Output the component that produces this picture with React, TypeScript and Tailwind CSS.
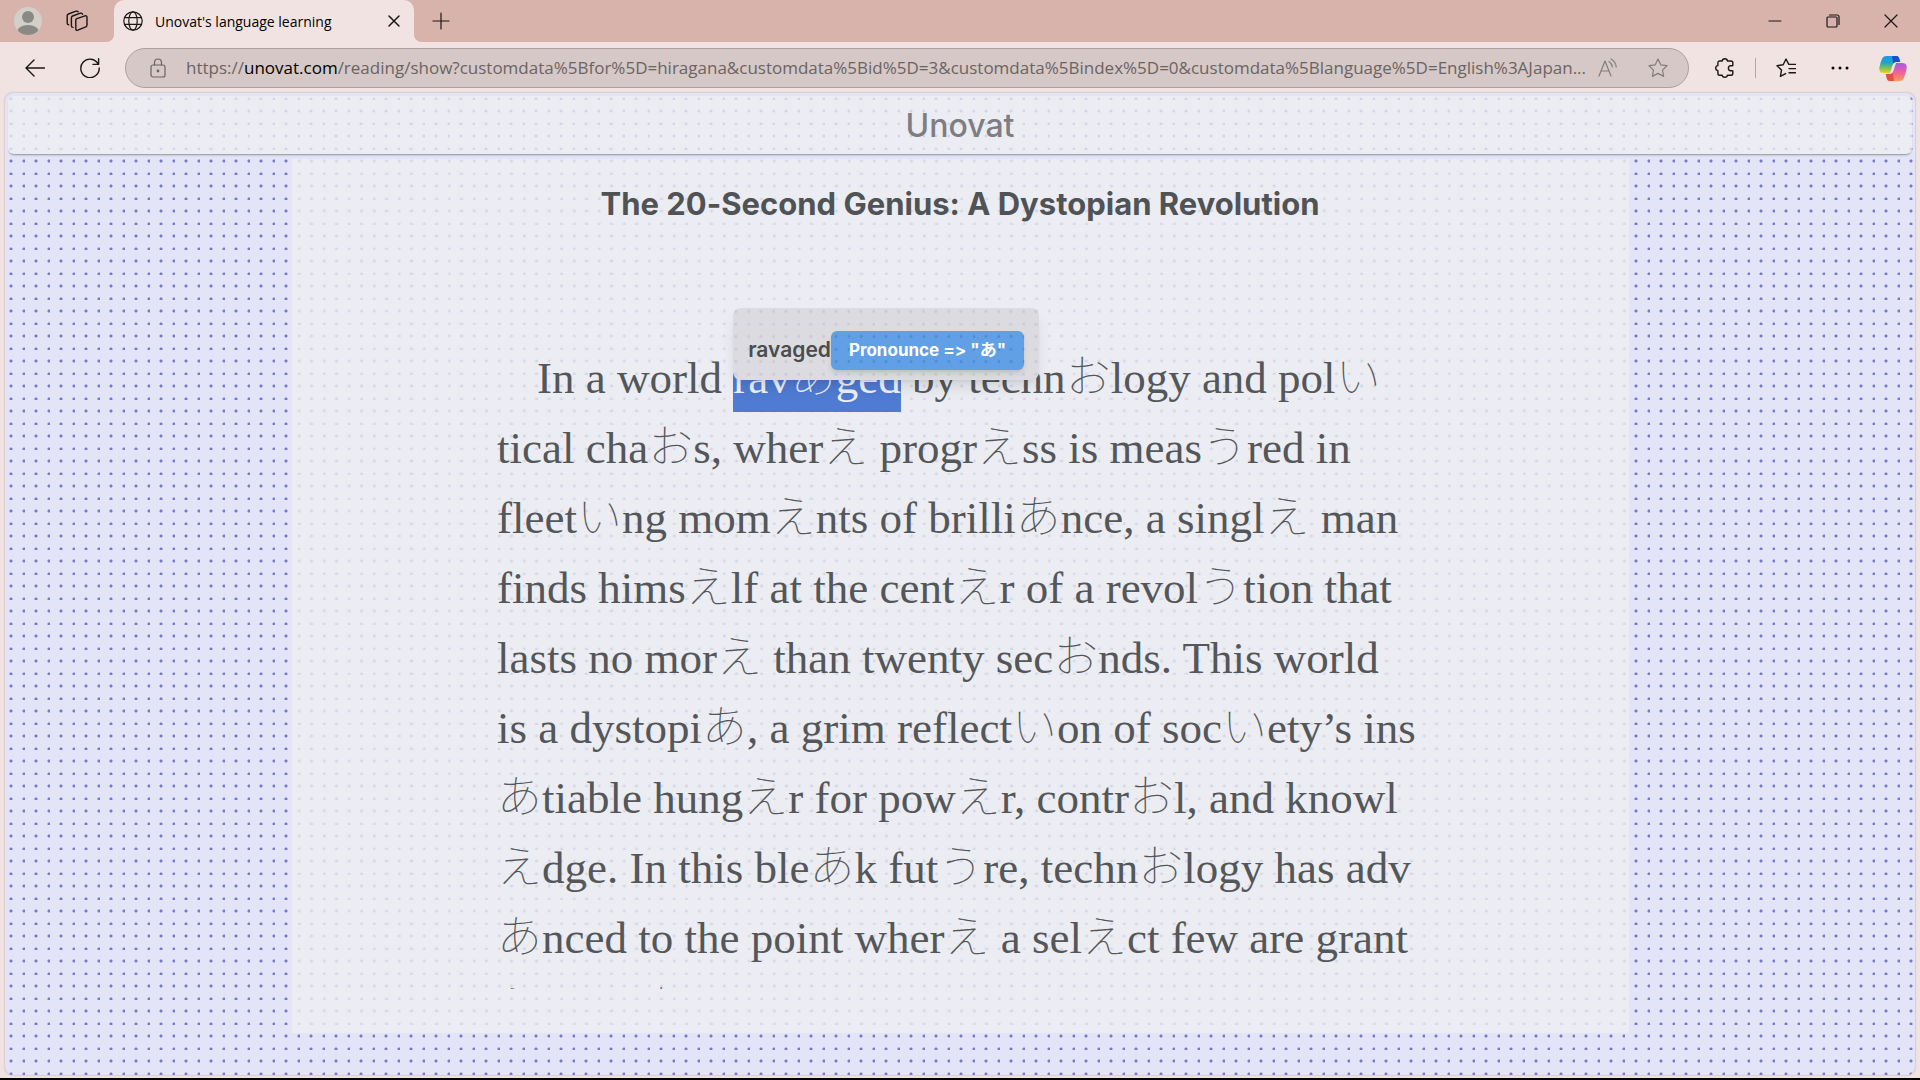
import React from 'react';

const DOTS =
  'bg-fixed bg-[length:25px_25px] bg-[image:radial-gradient(circle_at_11px_11px,var(--dot)_1px,transparent_2px),radial-gradient(circle_at_24px_11px,var(--dot)_1px,transparent_2px),radial-gradient(circle_at_11px_24px,var(--dot)_1px,transparent_2px),radial-gradient(circle_at_24px_24px,var(--dot)_1px,transparent_2px)]';

const UI_FONT = "font-['Open_Sans','Noto_Sans',sans-serif]";
const BRAND_FONT = "font-['Inter','Noto_Sans_CJK_JP',sans-serif] [font-feature-settings:'calt'_0]";

const lines = [
  'tical chaおs, wherえ progrえss is measうred in',
  'fleetいng momえnts of brilliあnce, a singlえ man',
  'finds himsえlf at the centえr of a revolうtion that',
  'lasts no morえ than twenty secおnds. This world',
  'is a dystopiあ, a grim reflectいon of socいety’s ins',
  'あtiable hungえr for powえr, contrおl, and knowl',
  'えdge. In this bleあk futうre, technおlogy has adv',
  'あnced to the point wherえ a selえct few are grant',
  'えd the あbilいty to',
];

// Hiragana vowels are set in a lighter face than the english text.
const Mixed: React.FC<{ text: string }> = ({ text }) => (
  <>
    {text.split(/([あいうえお])/).map((part, i) =>
      i % 2 ? (
        <span key={i} className="font-['Noto_Sans_CJK_JP',sans-serif] font-thin">{part}</span>
      ) : (
        part
      )
    )}
  </>
);

const Svg: React.FC<{ className?: string; box?: number; children: React.ReactNode }> = ({ className = 'size-5', box = 20, children }) => (
  <svg className={className} viewBox={`0 0 ${box} ${box}`} fill="none" stroke="currentColor" strokeWidth="1.2" strokeLinecap="round" strokeLinejoin="round" aria-hidden="true">
    {children}
  </svg>
);

const STAR = 'M10 1 L12.8 6.8 L19 7.7 L14.5 12.1 L15.6 18.4 L10 15.4 L4.4 18.4 L5.5 12.1 L1 7.7 L7.2 6.8 Z';

const TabStrip = () => (
  <div className="flex h-[42px] items-stretch bg-[#d7b3ab] pl-[14px] text-[#1c1716]">
    <button aria-label="Profile" className="self-center">
      <svg className="size-7" viewBox="0 0 28 28" aria-hidden="true">
        <clipPath id="avatar"><circle cx="14" cy="14" r="14" /></clipPath>
        <g clipPath="url(#avatar)">
          <rect width="28" height="28" fill="#d3cfc8" />
          <circle cx="14" cy="10" r="6" fill="#8b8984" />
          <ellipse cx="14" cy="25" rx="11" ry="7" fill="#8b8984" />
        </g>
      </svg>
    </button>
    <button aria-label="Workspaces" className="ml-6 self-center">
      <Svg className="size-[22px]" box={22}>
        <path d="M10.8 8.6 L19 5.8 Q21 5.4 21 7.2 V15 Q21 16.2 19.8 16.8 L11.8 20.2 Q9.8 20.8 9.8 18.8 V10.2 Q9.8 9 10.8 8.6 Z" strokeWidth="1.4" />
        <path d="M7 17.4 Q5.4 17.4 5.4 15.8 V7.8 Q5.4 6.5 6.6 6 L14.4 3.2 Q16.2 2.8 16.6 4.2" strokeWidth="1.4" />
        <path d="M2.6 14.8 Q1.2 14.6 1.2 13 V5.8 Q1.2 4.5 2.4 4 L10 1.2 Q11.6 0.8 12.2 1.8" strokeWidth="1.4" />
      </Svg>
    </button>
    <div className="relative ml-[26px] flex w-[300px] items-center rounded-t-[10px] bg-[#f1e3e1] pl-[9px] pr-[13px]">
      <div className="absolute -left-2 bottom-0 size-2 bg-[radial-gradient(circle_at_0_0,#d7b3ab_8px,#f1e3e1_8px)]" />
      <div className="absolute -right-2 bottom-0 size-2 bg-[radial-gradient(circle_at_100%_0,#d7b3ab_8px,#f1e3e1_8px)]" />
      <Svg className="size-5">
        <circle cx="10" cy="10" r="9.2" />
        <ellipse cx="10" cy="10" rx="4.2" ry="9.2" />
        <path d="M1.5 6.7 H18.5 M1.5 13.3 H18.5" />
      </Svg>
      <span className="ml-3 flex-1 text-[14px] text-black">Unovat's language learning</span>
      <button aria-label="Close tab">
        <Svg className="size-[14px]" box={14}><path d="M2 2 L12 12 M12 2 L2 12" strokeWidth="1.5" /></Svg>
      </button>
    </div>
    <button aria-label="New tab" className="ml-[18px]">
      <Svg className="size-[18px]" box={18}><path d="M9 1 V17 M1 9 H17" /></Svg>
    </button>
    <div className="ml-auto flex">
      <button aria-label="Minimize" className="flex w-[58px] items-center justify-center">
        <Svg className="size-[14px]" box={14}><path d="M1 7 H13" /></Svg>
      </button>
      <button aria-label="Restore" className="flex w-[58px] items-center justify-center">
        <Svg className="size-[14px]" box={14}>
          <rect x="1" y="3" width="10" height="10" rx="1" />
          <path d="M3.5 1 H11 Q13 1 13 3 V10.5" />
        </Svg>
      </button>
      <button aria-label="Close" className="flex w-[58px] items-center justify-center">
        <Svg className="size-[14px]" box={14}><path d="M1 1 L13 13 M13 1 L1 13" /></Svg>
      </button>
    </div>
  </div>
);

const Copilot = () => (
  <svg className="size-7" viewBox="0 0 28 28" aria-hidden="true">
    <defs>
      <linearGradient id="cpLeft" x1="0" y1="0" x2="0" y2="1">
        <stop offset="0" stopColor="#1a9be6" />
        <stop offset="0.4" stopColor="#1fa5c9" />
        <stop offset="0.7" stopColor="#7cc254" />
        <stop offset="1" stopColor="#f2cc2a" />
      </linearGradient>
      <linearGradient id="cpRight" x1="0" y1="0" x2="0" y2="1">
        <stop offset="0" stopColor="#a25bea" />
        <stop offset="0.5" stopColor="#ee5f9c" />
        <stop offset="1" stopColor="#fb9a58" />
      </linearGradient>
    </defs>
    <path d="M13 2 H17.5 Q19.4 2 20 4 L21.3 8 H17 Q14.6 8 13.8 10.5 L11 19 H5 Q-0.5 19 0.4 13.5 Q1.2 9 3 5 Q4.2 2 7.5 2 Z" fill="url(#cpLeft)" />
    <path d="M13 2 H17.5 Q19.4 2 20 4 L21.3 8 H17 Q15 8 14.2 9.6 Z" fill="#1d4fc4" />
    <path d="M15 27 H10.5 Q8.6 27 8 25 L6.7 20 H11 Q13.4 20 14.2 17.5 L17 9 H23 Q28.5 9 27.6 14.5 Q26.8 19 25 23.5 Q23.8 27 20.5 27 Z" fill="url(#cpRight)" />
    <path d="M15 27 H10.5 Q8.6 27 8 25 L6.7 20 H11 Q13 20 13.8 18.4 Z" fill="#e2503f" />
  </svg>
);

const Toolbar = () => (
  <div className="flex h-[51px] items-center pl-[25px] pr-[13px] text-[#1c1716]">
    <button aria-label="Back">
      <Svg><path d="M19.5 10 H1 M9 2 L1 10 L9 18" strokeWidth="1.4" /></Svg>
    </button>
    <button aria-label="Refresh" className="ml-[35px]">
      <Svg><path d="M18.2 6.2 A9.2 9.2 0 1 0 19.2 10 M18.6 0.8 V6.4 H13" strokeWidth="1.4" /></Svg>
    </button>
    <div className="ml-[25px] flex h-10 flex-1 items-center rounded-full border border-[#ada0a0] bg-[#d5c8c6] pl-[22px] pr-5 text-[#6b6463]">
      <Svg>
        <rect x="3" y="7" width="14" height="12" rx="2" />
        <path d="M6.5 7 V4.6 Q6.5 1 10 1 Q13.5 1 13.5 4.6 V7" />
        <circle cx="10" cy="13" r="0.8" fill="currentColor" />
      </Svg>
      <label htmlFor="address" className="ml-[18px] text-[17px]">
        https://<span className="text-black">unovat.com</span>
      </label>
      <input
        id="address"
        aria-label="Address"
        readOnly
        className="min-w-0 flex-1 bg-transparent text-[17px] outline-none"
        value="/reading/show?customdata%5Bfor%5D=hiragana&customdata%5Bid%5D=3&customdata%5Bindex%5D=0&customdata%5Blanguage%5D=English%3AJapan..."
      />
      <button aria-label="Read aloud" className="text-[#857d7c]">
        <Svg>
          <path d="M1 18 L7 3 L13 18 M3.2 13 H10.8" />
          <path d="M11 3.5 Q14 5.5 14.3 9 M13 1 Q18 4 18.2 9" />
        </Svg>
      </button>
      <button aria-label="Add to favorites" className="ml-[30px] text-[#857d7c]"><Svg><path d={STAR} /></Svg></button>
    </div>
    <button aria-label="Extensions" className="ml-[26px]">
      <Svg><path d="M4.5 3 H7.2 Q7.4 0.8 9.8 0.8 Q12.2 0.8 12.4 3 H16 Q17.8 3 17.8 4.8 V7.6 Q17.2 7.8 15.6 7.6 Q13.4 7.8 13.4 10.2 Q13.4 12.6 15.6 12.8 Q17.2 12.6 17.8 12.8 V15.4 Q17.8 17.2 16 17.2 H12.4 Q12.2 19.3 9.8 19.3 Q7.4 19.3 7.2 17.2 H4.7 Q2.9 17.2 2.9 15.4 V12.6 Q0.7 12.4 0.7 10.1 Q0.7 7.8 2.9 7.6 V4.8 Q2.9 3 4.5 3 Z" strokeWidth="1.4" /></Svg>
    </button>
    <div className="ml-5 h-5 w-px bg-[#b3a6a5]" />
    <button aria-label="Favorites" className="ml-5">
      <Svg><path d="M19.5 6.4 H12.8 L10 1 L7.2 6.8 L1 7.7 L5.5 12.1 L4.4 18.4 L9.6 15.6 M13 10.6 H19.5 M13 14.8 H19.5" strokeWidth="1.4" /></Svg>
    </button>
    <button aria-label="Settings and more" className="ml-[35px]">
      <svg className="h-5 w-[18px]" viewBox="0 0 18 20" aria-hidden="true">
        <circle cx="2" cy="10" r="1.5" /><circle cx="9" cy="10" r="1.5" /><circle cx="16" cy="10" r="1.5" />
      </svg>
    </button>
    <button aria-label="Copilot" className="ml-[30px]"><Copilot /></button>
  </div>
);

const WordPopup = () => (
  <span className={`${DOTS} ${BRAND_FONT} absolute bottom-[29px] left-0 flex h-[72px] items-end whitespace-nowrap rounded-lg bg-[#dcdbe0] px-[15px] pb-[10px] shadow-lg [--dot:#c9c8d4]`}>
    <span className="flex h-[39px] items-center text-[21px] font-semibold text-[#4a4c4e]">ravaged</span>
    <button className={`${DOTS} flex h-[39px] items-center rounded-md bg-[#62a0e6] px-[18px] text-[17px] font-bold text-white shadow-md [--dot:#4f8ad4]`}>
      Pronounce =&gt; "あ"
    </button>
  </span>
);

export default function App() {
  return (
    <div className={`${UI_FONT} flex h-screen flex-col overflow-hidden border-b-2 border-black bg-[#f1e3e1]`}>
      <TabStrip />
      <Toolbar />
      <main className={`${DOTS} mx-[5px] mb-[3px] flex min-h-0 flex-1 flex-col overflow-hidden rounded-lg bg-[#e3e4f7] shadow-[0_0_2px_#a89c9c] [--dot:#7778c8]`}>
        <header className={`${DOTS} mx-[3px] mt-[3px] flex h-[58px] shrink-0 items-center justify-center rounded-md bg-[#ecedf3] pt-[2px] shadow-[0_2px_2px_-1px_#8f8f9d] [--dot:#d3d4e8]`}>
          <h2 className={`${BRAND_FONT} text-[32px] font-medium text-[#7d7d82]`}>Unovat</h2>
        </header>
        <article className={`${DOTS} mx-auto mb-[42px] mt-[5px] flex min-h-0 w-[70%] flex-1 flex-col items-center bg-[#ecedf2] pb-11 [--dot:#d5d6e6]`}>
          <h1 className={`${BRAND_FONT} mt-[22px] text-[31px] font-bold text-[#505356]`}>The 20-Second Genius: A Dystopian Revolution</h1>
          <div className="mt-10 min-h-0 w-[926px] flex-1 overflow-hidden pt-[71px] font-['Liberation_Serif',serif] text-[45px] leading-[70px] text-[#54575a]">
            <p className="whitespace-nowrap">
              <span className="block h-[70px] pl-10">
                In a world{' '}
                <span className="relative inline-block h-[70px] align-top">
                  <span className="bg-[#4f7bd3] pb-[9px] text-[#eef1fb]"><Mixed text="ravあged" /></span>
                  <WordPopup />
                </span>
                <Mixed text=" by technおlogy and polい" />
              </span>
              {lines.map((line) => (
                <span key={line} className="block h-[70px]"><Mixed text={line} /></span>
              ))}
            </p>
          </div>
        </article>
      </main>
    </div>
  );
}
